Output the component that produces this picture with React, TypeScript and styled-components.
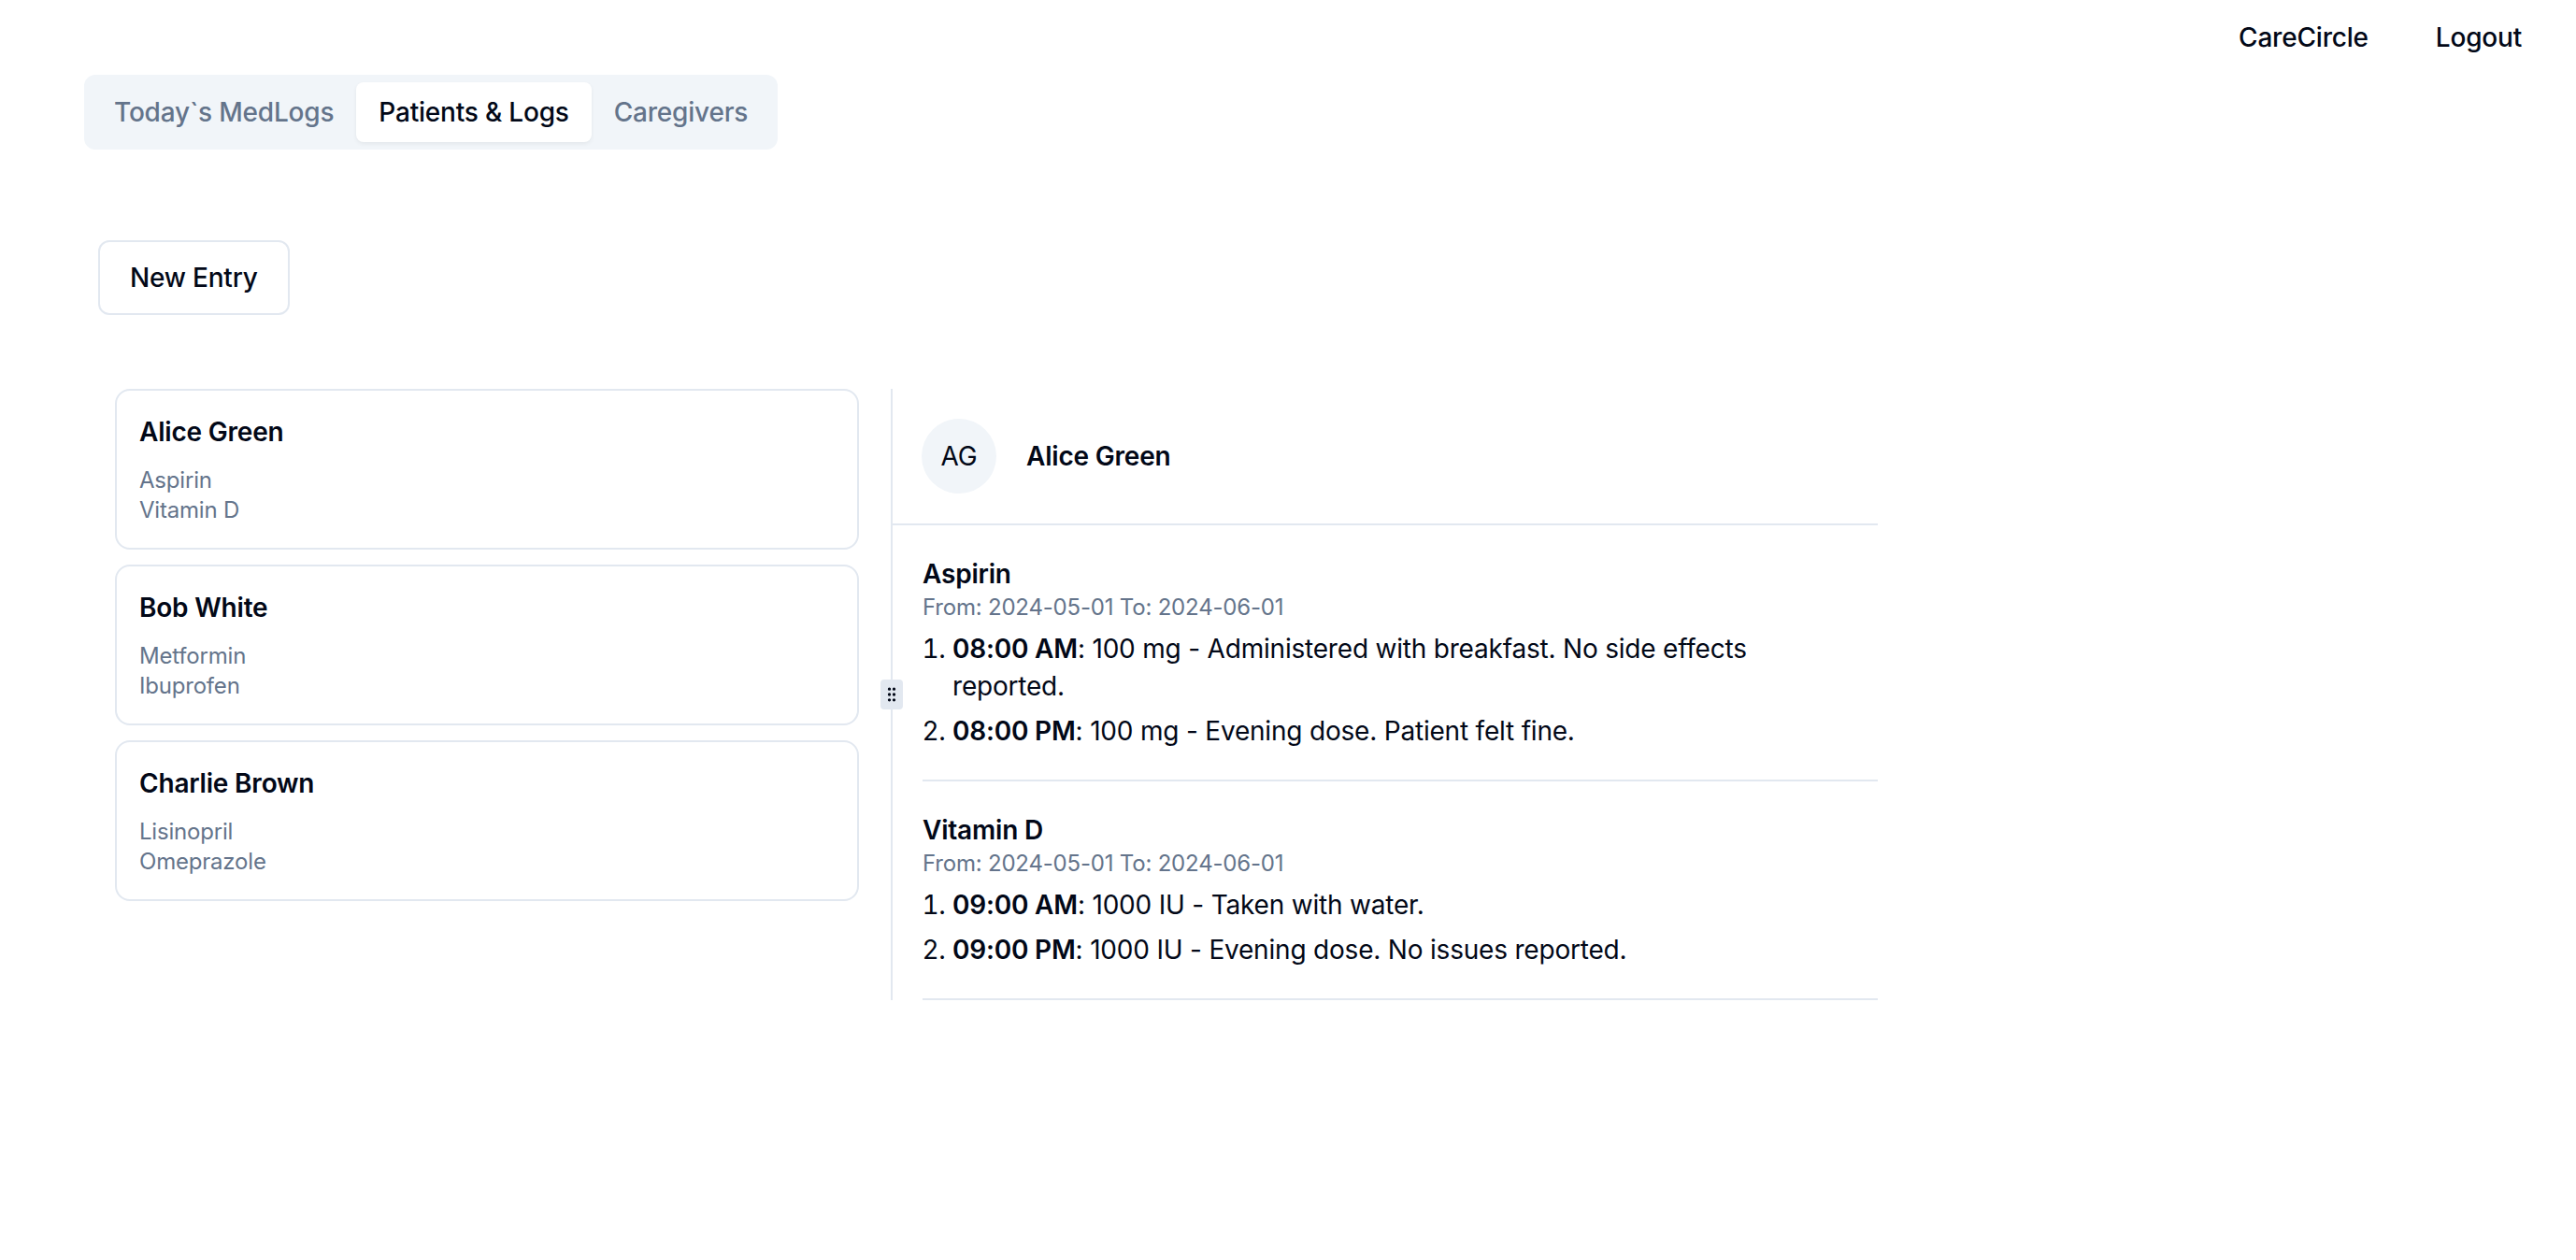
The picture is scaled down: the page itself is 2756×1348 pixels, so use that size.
import styled, { createGlobalStyle } from 'styled-components';
import { GripVertical } from 'lucide-react';

const GlobalStyle = createGlobalStyle`
  html, body {
    margin: 0;
    padding: 0;
    background: #ffffff;
    color: #020817;
    font-family: Inter, 'Noto Sans', 'Liberation Sans', sans-serif;
    letter-spacing: -0.2px;
  }
  * {
    box-sizing: border-box;
  }
`;

const Page = styled.div`
  min-height: 1348px;
  width: 2756px;
`;

const TopBar = styled.header`
  display: flex;
  justify-content: flex-end;
  align-items: center;
  gap: 72px;
  height: 80px;
  padding: 0 58px 0 0;
`;

const NavLink = styled.a`
  font-size: 28px;
  line-height: 40px;
  font-weight: 500;
  color: #020817;
  text-decoration: none;
  cursor: pointer;
`;

const TabsList = styled.div`
  display: inline-flex;
  align-items: center;
  height: 80px;
  margin-left: 90px;
  padding: 8px;
  border-radius: 12px;
  background: #f1f5f9;
`;

const TabTrigger = styled.button<{ $active?: boolean }>`
  height: 64px;
  padding: 0 24px;
  border: none;
  border-radius: 8px;
  font-family: inherit;
  font-size: 28px;
  font-weight: 500;
  letter-spacing: inherit;
  white-space: nowrap;
  cursor: pointer;
  background: ${(p) => (p.$active ? '#ffffff' : 'transparent')};
  color: ${(p) => (p.$active ? '#020817' : '#64748b')};
  box-shadow: ${(p) => (p.$active ? '0 2px 4px rgba(0, 0, 0, 0.06)' : 'none')};
`;

const Toolbar = styled.div`
  display: flex;
  padding: 97px 0 0 105px;
`;

const OutlineButton = styled.button`
  height: 80px;
  padding: 0 32px;
  border: 2px solid #e2e8f0;
  border-radius: 12px;
  background: #ffffff;
  color: #020817;
  font-family: inherit;
  font-size: 28px;
  font-weight: 500;
  letter-spacing: inherit;
  cursor: pointer;
`;

const PanelGroup = styled.div`
  display: flex;
  width: 1919px;
  margin: 79px 0 0 90px;
`;

const LeftPanel = styled.div`
  width: 863px;
  padding: 0 34px 0 33px;
  display: flex;
  flex-direction: column;
  gap: 16px;
`;

const Handle = styled.div`
  position: relative;
  width: 2px;
  background: #e2e8f0;
  display: flex;
  align-items: center;
  justify-content: center;
`;

const HandleGrip = styled.div`
  position: absolute;
  z-index: 1;
  width: 24px;
  height: 32px;
  border: 2px solid #e2e8f0;
  border-radius: 4px;
  background: #e2e8f0;
  display: flex;
  align-items: center;
  justify-content: center;
  color: #020817;
`;

const RightPanel = styled.div`
  flex: 1;
  display: flex;
  flex-direction: column;
`;

const PatientCard = styled.div`
  border: 2px solid #e2e8f0;
  border-radius: 16px;
  padding: 24px;
  background: #ffffff;
`;

const CardTitle = styled.div`
  font-size: 28px;
  line-height: 40px;
  font-weight: 600;
  color: #020817;
`;

const MedList = styled.div`
  margin-top: 16px;
  display: flex;
  flex-direction: column;
`;

const MedName = styled.div`
  font-size: 24px;
  line-height: 32px;
  color: #64748b;
`;

const DetailHeader = styled.div`
  display: flex;
  align-items: center;
  gap: 32px;
  padding: 32px 31px;
  border-bottom: 2px solid #e2e8f0;
`;

const Avatar = styled.div`
  width: 80px;
  height: 80px;
  border-radius: 50%;
  background: #f1f5f9;
  display: flex;
  align-items: center;
  justify-content: center;
  font-size: 28px;
  color: #020817;
`;

const DetailName = styled.div`
  font-size: 28px;
  line-height: 40px;
  font-weight: 600;
`;

const MedSection = styled.section`
  margin-left: 32px;
  padding: 32px 32px 32px 0;
  border-bottom: 2px solid #e2e8f0;
`;

const MedTitle = styled.div`
  font-size: 28px;
  line-height: 40px;
  font-weight: 600;
`;

const DateRange = styled.div`
  font-size: 24px;
  line-height: 32px;
  color: #64748b;
`;

const LogList = styled.ol`
  margin: 8px 0 0;
  padding-left: 32px;
  list-style: decimal;
  display: flex;
  flex-direction: column;
  gap: 8px;
`;

const LogItem = styled.li`
  font-size: 28px;
  line-height: 40px;
  color: #020817;
`;

const Time = styled.span`
  font-weight: 600;
`;

interface Log {
  time: string;
  note: string;
}

interface Medication {
  name: string;
  from: string;
  to: string;
  logs: Log[];
}

const patients = [
  { name: 'Alice Green', meds: ['Aspirin', 'Vitamin D'] },
  { name: 'Bob White', meds: ['Metformin', 'Ibuprofen'] },
  { name: 'Charlie Brown', meds: ['Lisinopril', 'Omeprazole'] },
];

const medications: Medication[] = [
  {
    name: 'Aspirin',
    from: '2024-05-01',
    to: '2024-06-01',
    logs: [
      { time: '08:00 AM', note: '100 mg - Administered with breakfast. No side effects reported.' },
      { time: '08:00 PM', note: '100 mg - Evening dose. Patient felt fine.' },
    ],
  },
  {
    name: 'Vitamin D',
    from: '2024-05-01',
    to: '2024-06-01',
    logs: [
      { time: '09:00 AM', note: '1000 IU - Taken with water.' },
      { time: '09:00 PM', note: '1000 IU - Evening dose. No issues reported.' },
    ],
  },
];

const App = () => {
  return (
    <Page>
      <GlobalStyle />
      <TopBar>
        <NavLink>CareCircle</NavLink>
        <NavLink>Logout</NavLink>
      </TopBar>

      <TabsList>
        <TabTrigger>Today`s MedLogs</TabTrigger>
        <TabTrigger $active>Patients &amp; Logs</TabTrigger>
        <TabTrigger>Caregivers</TabTrigger>
      </TabsList>

      <Toolbar>
        <OutlineButton>New Entry</OutlineButton>
      </Toolbar>

      <PanelGroup>
        <LeftPanel>
          {patients.map((p) => (
            <PatientCard key={p.name}>
              <CardTitle>{p.name}</CardTitle>
              <MedList>
                {p.meds.map((m) => (
                  <MedName key={m}>{m}</MedName>
                ))}
              </MedList>
            </PatientCard>
          ))}
        </LeftPanel>

        <Handle>
          <HandleGrip>
            <GripVertical size={20} strokeWidth={2} />
          </HandleGrip>
        </Handle>

        <RightPanel>
          <DetailHeader>
            <Avatar>AG</Avatar>
            <DetailName>Alice Green</DetailName>
          </DetailHeader>
          {medications.map((med) => (
            <MedSection key={med.name}>
              <MedTitle>{med.name}</MedTitle>
              <DateRange>
                From: {med.from} To: {med.to}
              </DateRange>
              <LogList>
                {med.logs.map((log) => (
                  <LogItem key={log.time}>
                    <Time>{log.time}</Time>: {log.note}
                  </LogItem>
                ))}
              </LogList>
            </MedSection>
          ))}
        </RightPanel>
      </PanelGroup>
    </Page>
  );
};

export default App;
